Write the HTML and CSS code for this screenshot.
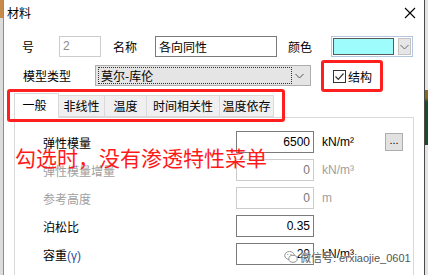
FILE: index.html
```html
<!DOCTYPE html>
<html>
<head>
<meta charset="utf-8">
<link rel="stylesheet" href="styles.css">
</head>
<body>
<div class="stage">
  <div class="edge-left"><div class="edge-left-top"></div></div>
  <div class="dialog">
    <div class="titlebar">
      <span class="title">材料</span>
      <svg class="close" width="12" height="12" viewBox="0 0 12 12"><path d="M1 1 L11 11 M11 1 L1 11" stroke="#000" stroke-width="1.1" fill="none"/></svg>
    </div>
    <div class="row row1">
      <span class="lbl">号</span>
      <div class="field disabled w-no">2</div>
      <span class="lbl l-name">名称</span>
      <div class="field w-name">各向同性</div>
      <span class="lbl l-color">颜色</span>
      <div class="colorcombo">
        <div class="swatch"></div>
        <div class="ddbtn"><svg width="9" height="6" viewBox="0 0 9 6"><path d="M0.5 1 L4.5 5 L8.5 1" stroke="#666" fill="none"/></svg></div>
      </div>
    </div>
    <div class="row row2">
      <span class="lbl l-type">模型类型</span>
      <div class="combo">
        <div class="focus">莫尔-库伦</div>
        <svg class="chev" width="9" height="6" viewBox="0 0 9 6"><path d="M0.5 1 L4.5 5 L8.5 1" stroke="#555" fill="none"/></svg>
      </div>
      <div class="check">
        <span class="box"><svg width="11" height="11" viewBox="0 0 11 11"><path d="M1.5 5.5 L4.3 8.3 L9.5 2.5" stroke="#333" stroke-width="1.2" fill="none"/></svg></span>
        <span>结构</span>
      </div>
    </div>
    <div class="tabs">
      <div class="tab active t1">一般</div>
      <div class="tab t2">非线性</div>
      <div class="tab t3">温度</div>
      <div class="tab t4">时间相关性</div>
      <div class="tab t5">温度依存</div>
    </div>
    <div class="panel">
      <div class="prow">
        <span class="plbl">弹性模量</span>
        <div class="field num">6500</div>
        <span class="unit">kN/m²</span>
        <div class="dots">...</div>
      </div>
      <div class="prow">
        <span class="plbl dim">弹性模量增量</span>
        <div class="field num disabled">0</div>
        <span class="unit dim">kN/m³</span>
      </div>
      <div class="prow">
        <span class="plbl dim">参考高度</span>
        <div class="field num disabled">0</div>
        <span class="unit dim">m</span>
      </div>
      <div class="prow">
        <span class="plbl">泊松比</span>
        <div class="field num">0.35</div>
      </div>
      <div class="prow">
        <span class="plbl">容重<span class="gamma">(γ)</span></span>
        <div class="field num">20</div>
        <span class="unit">kN/m³</span>
      </div>
    </div>
  </div>
  <div class="edge-right"><div class="edge-right-blob"></div></div>
</div>
<div class="annot-box box-check"></div>
<div class="annot-box box-tabs"></div>
<div class="annot-text">勾选时，没有渗透特性菜单</div>
<div class="watermark">
  <svg width="14" height="14" viewBox="0 0 14 14"><ellipse cx="5.5" cy="5.5" rx="4.8" ry="4" fill="none" stroke="#888" stroke-width="0.9"/><ellipse cx="9" cy="8.8" rx="4.2" ry="3.5" fill="#fff" stroke="#888" stroke-width="0.9"/><circle cx="3.8" cy="4.5" r="0.6" fill="#888"/><circle cx="7" cy="4.5" r="0.6" fill="#888"/></svg>
  <span>微信号: erxiaojie_0601</span>
</div>
</body>
</html>
```

FILE: styles.css
```css
* { box-sizing: border-box; }
html, body { margin: 0; padding: 0; }
body {
  width: 428px;
  height: 275px;
  overflow: hidden;
  position: relative;
  font-family: "Noto Sans CJK SC", "Noto Sans", sans-serif;
  font-size: 12px;
  color: #000;
  background: #e6e6e6;
}
.stage {
  display: flex;
  height: 275px;
}
.edge-left {
  width: 3px;
  background: #dcdcdc;
}
.edge-left-top {
  height: 18px;
  background: #c88a4a;
}
.edge-right {
  width: 3px;
  background: #e4e4e4;
  padding-top: 90px;
}
.edge-right-blob {
  height: 55px;
  background: linear-gradient(#8a6a20 0, #8a6a20 8px, #1e4a2a 12px, #1e4a2a 100%);
}
.dialog {
  width: 422px;
  background: #fff;
  border-left: 1px solid #8c8c8c;
  border-right: 1px solid #4a4a4a;
  display: flex;
  flex-direction: column;
}
.titlebar {
  height: 28px;
  display: flex;
  align-items: flex-start;
  justify-content: space-between;
  padding: 4px 8px 0 3px;
}
.title {
  line-height: 18px;
  font-size: 12px;
}
.close {
  margin-top: 3px;
}
.row {
  display: flex;
  align-items: center;
  height: 21px;
  padding-left: 18px;
}
.row1 { margin-top: 8px; }
.row2 { margin-top: 8px; }
.lbl { line-height: 21px; white-space: nowrap; }
.field {
  height: 21px;
  border: 1px solid #7a7a7a;
  background: #fff;
  line-height: 19px;
  padding: 0 3px;
  white-space: nowrap;
  overflow: hidden;
}
.field.disabled {
  border-color: #cccccc;
  color: #8a8a8a;
}
.w-no { width: 42px; margin-left: 25px; font-family: "Liberation Sans", sans-serif; }
.l-name { margin-left: 12px; }
.w-name { width: 122px; margin-left: 18px; }
.l-color { margin-left: 11px; }
.colorcombo {
  margin-left: 19px;
  width: 82px;
  height: 21px;
  border: 1px solid #b4c6e0;
  display: flex;
  align-items: center;
  padding: 1px;
  gap: 4px;
}
.swatch {
  width: 62px;
  height: 17px;
  background: #9ffcfc;
  border: 1px solid #5a5a5a;
}
.ddbtn {
  width: 13px;
  height: 17px;
  background: #e6e6e6;
  border: 1px solid #c4c4c4;
  display: flex;
  align-items: center;
  justify-content: center;
}
.l-type { margin-left: 1px; }
.combo {
  margin-left: 24px;
  width: 216px;
  height: 21px;
  background: #e5e5e5;
  border: 1px solid #adadad;
  display: flex;
  align-items: center;
  padding: 1px 6px 1px 2px;
}
.focus {
  width: 194px;
  height: 17px;
  border: 1px dotted #333;
  line-height: 15px;
  padding-left: 2px;
}
.chev { margin-left: auto; }
.check {
  margin-left: 22px;
  display: flex;
  align-items: center;
  gap: 2px;
  margin-top: 2px;
}
.box {
  width: 13px;
  height: 13px;
  border: 1px solid #333;
  background: #fff;
  display: flex;
  align-items: center;
  justify-content: center;
}
.tabs {
  margin-top: 7px;
  margin-left: 10px;
  display: flex;
  align-items: flex-end;
  height: 24px;
  position: relative;
  z-index: 1;
}
.tab {
  height: 22px;
  background: #f0f0f0;
  border: 1px solid #d9d9d9;
  border-left: none;
  text-align: center;
  line-height: 20px;
  white-space: nowrap;
}
.tab.active {
  height: 25px;
  background: #fff;
  border-left: 1px solid #d9d9d9;
  border-bottom: none;
  line-height: 22px;
  margin-bottom: -1px;
  padding-right: 4px;
}
.t1 { width: 45px; }
.t2 { width: 46px; }
.t3 { width: 42px; }
.t4 { width: 73px; }
.t5 { width: 54px; }
.panel {
  margin-left: 10px;
  width: 400px;
  flex: 1;
  border: 1px solid #d9d9d9;
  border-bottom: none;
  padding: 13px 0 0 28px;
  display: flex;
  flex-direction: column;
  gap: 6px;
}
.prow {
  display: flex;
  align-items: center;
  height: 22px;
}
.plbl {
  width: 193px;
  white-space: nowrap;
}
.dim { color: #a0a0a0; }
.field.num {
  width: 78px;
  height: 22px;
  line-height: 20px;
  text-align: right;
  font-family: "Liberation Sans", sans-serif;
}
.field.num.disabled { color: #777; }
.unit {
  margin-left: 8px;
  font-family: "Liberation Sans", sans-serif;
  font-size: 12px;
}
.gamma { color: #2b4ea0; font-family: "Liberation Sans", sans-serif; }
.dots {
  margin-left: auto;
  margin-right: 10px;
  width: 18px;
  height: 18px;
  background: #e1e1e1;
  border: 1px solid #adadad;
  font-family: "Liberation Sans", sans-serif;
  font-size: 11px;
  text-align: center;
  line-height: 12px;
}
.annot-box {
  position: absolute;
  border: 3px solid #ff1f1f;
  border-radius: 3px;
}
.box-check { left: 321px; top: 60px; width: 62px; height: 32px; }
.box-tabs { left: 7px; top: 89px; width: 278px; height: 33px; z-index: 2; }
.annot-text {
  position: absolute;
  left: 15px;
  top: 146px;
  font-size: 21px;
  line-height: 22px;
  color: #ff1a1a;
  white-space: nowrap;
}
.watermark {
  position: absolute;
  left: 284px;
  top: 249px;
  display: flex;
  align-items: center;
  gap: 2px;
  color: #555;
  font-size: 11px;
  font-family: "Liberation Sans", "Noto Sans CJK SC", sans-serif;
  text-shadow: 0 0 2px #fff, 0 0 2px #fff;
  white-space: nowrap;
}
```
